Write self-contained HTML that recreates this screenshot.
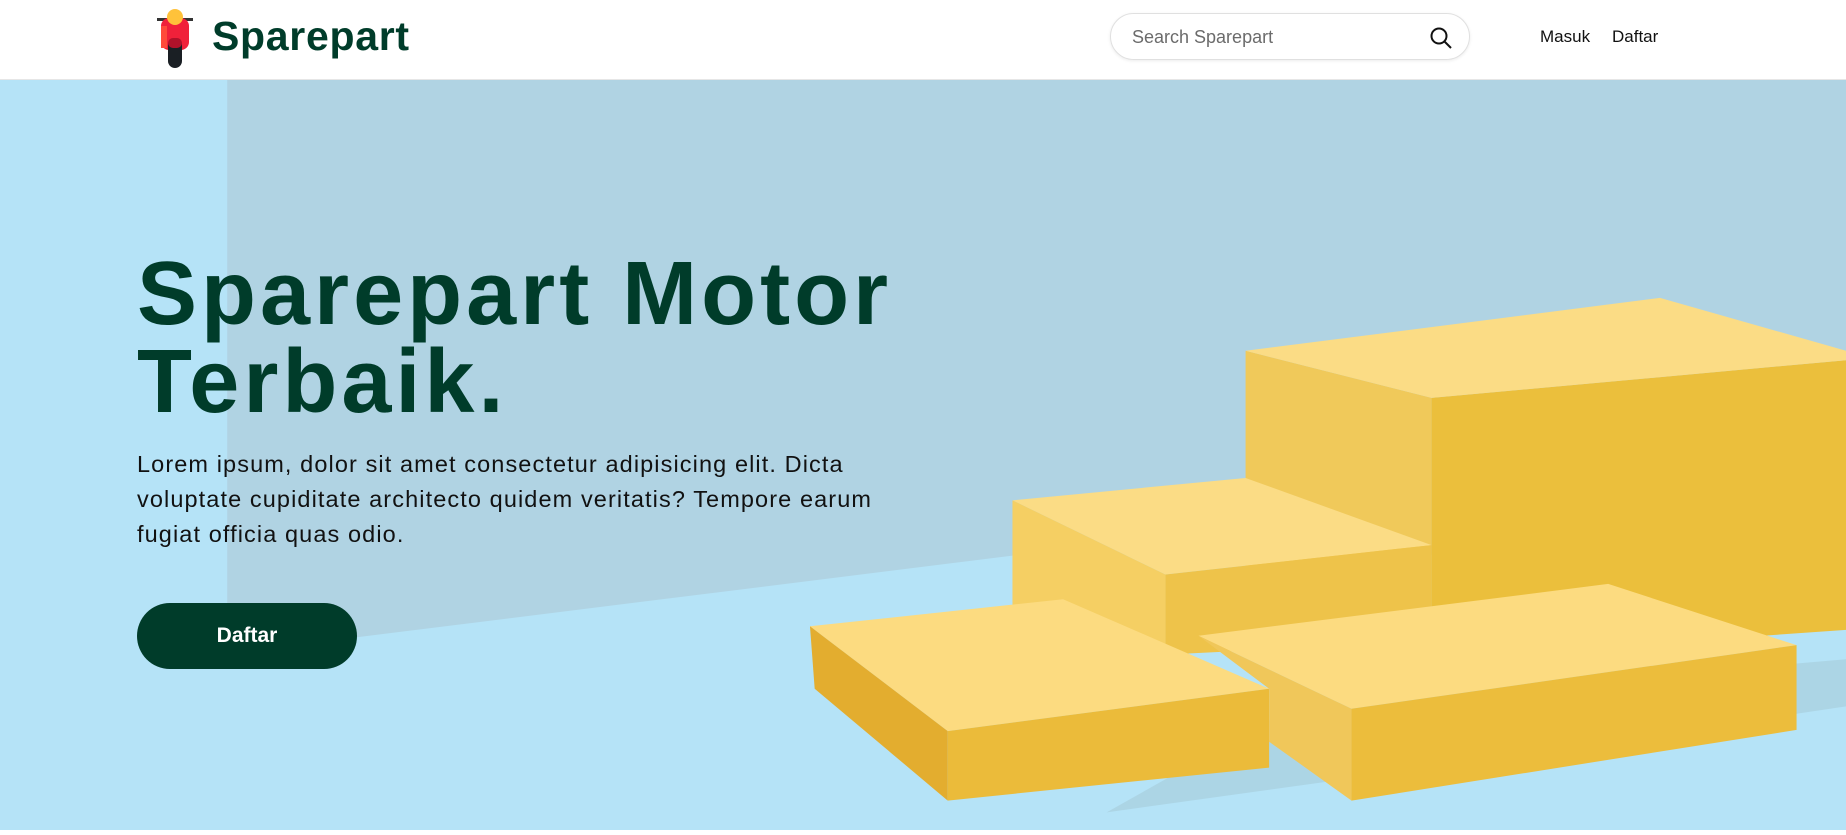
<!DOCTYPE html>
<html><head><meta charset="utf-8"><style>
*{margin:0;padding:0;box-sizing:border-box}
body{width:1846px;height:835px;overflow:hidden;background:#fff;font-family:"Liberation Sans",sans-serif;position:relative}
.hdr{position:absolute;left:0;top:0;width:1846px;height:80px;background:#fff;border-bottom:1px solid #e6e6e6}
.logo{position:absolute;left:212px;top:13px;font-size:41px;font-weight:700;color:#003c2a;letter-spacing:0.7px}
.search{position:absolute;left:1110px;top:13px;width:360px;height:47px;border:1px solid #e0e0e0;border-radius:24px;box-shadow:0 1px 3px rgba(0,0,0,.08)}
.search span{position:absolute;left:21px;top:13px;font-size:18px;color:#6b6b6b}
.nav{position:absolute;top:27px;font-size:17px;color:#111}
svg.bg{position:absolute;left:0;top:80px}
h1{position:absolute;left:137px;top:250px;font-size:90px;line-height:88px;color:#003c2a;font-weight:700;letter-spacing:4px;white-space:nowrap}
p{position:absolute;left:137px;top:447px;width:760px;font-size:23.5px;line-height:35px;color:#111;letter-spacing:1.1px}
.btn{position:absolute;left:137px;top:603px;width:220px;height:66px;border-radius:33px;background:#003c2a;color:#fff;font-size:21px;font-weight:700;text-align:center;line-height:66px}
</style></head><body>
<div class="hdr">
<svg style="position:absolute;left:157px;top:6px" width="36" height="62" viewBox="0 0 36 62">
<rect x="0" y="12" width="36" height="3" fill="#333"/>
<rect x="4" y="12" width="28" height="32" rx="8" fill="#f0213a"/>
<rect x="4" y="20" width="6" height="22" fill="#ff4a3a"/>
<circle cx="18" cy="11" r="8" fill="#ffc23a"/>
<rect x="11" y="32" width="14" height="30" rx="7" fill="#1a1f24"/>
<rect x="11" y="32" width="14" height="10" rx="5" fill="#b0122a"/>
</svg>
<div class="logo">Sparepart</div>
<div class="search"><span>Search Sparepart</span>
<svg style="position:absolute;left:318px;top:12px" width="24" height="24" viewBox="0 0 24 24" fill="none" stroke="#111" stroke-width="2"><circle cx="10" cy="10" r="7.5"/><path d="M15.5 15.5L22 22"/></svg></div>
<div class="nav" style="left:1540px">Masuk</div>
<div class="nav" style="left:1612px">Daftar</div>
</div>
<svg class="bg" width="1846" height="750" viewBox="0 68 1568 637" preserveAspectRatio="none">
<rect x="0" y="68" width="1568" height="640" fill="#b5e3f7"/>
<polygon points="193,68 1568,68 1568,470 860,472 193,555" fill="#b0d3e3"/>
<polygon points="940,690 1300,640 1568,600 1568,560 1100,600" fill="#a6cbd9" opacity=".6"/>
<polygon points="1058,298 1216,338 1216,545 1058,545" fill="#f0c95a"/>
<polygon points="1216,338 1568,306 1568,535 1216,560" fill="#ebbf3c"/>
<polygon points="1058,298 1410,253 1568,298 1568,306 1216,338" fill="#fbdc85"/>
<polygon points="860,425 1058,406 1216,463 990,488" fill="#fbdc85"/>
<polygon points="860,425 990,488 990,555 860,548" fill="#f5cf63"/>
<polygon points="990,488 1216,463 1216,545 990,556" fill="#eec34a"/>
<polygon points="688,532 903,509 1078,585 805,621" fill="#fcdb80"/>
<polygon points="688,532 805,621 805,680 692,585" fill="#e3ad2f"/>
<polygon points="805,621 1078,585 1078,652 805,680" fill="#ebbb3a"/>
<polygon points="1018,540 1366,496 1526,548 1148,602" fill="#fcdb80"/>
<polygon points="1018,540 1148,602 1148,680 1078,630 1078,585" fill="#f0c75a"/>
<polygon points="1148,602 1526,548 1526,620 1148,680" fill="#ecbd3c"/>
</svg>
<div style="position:absolute;left:0;top:830px;width:1846px;height:5px;background:#fff"></div>
<h1>Sparepart Motor<br>Terbaik.</h1>
<p>Lorem ipsum, dolor sit amet consectetur adipisicing elit. Dicta voluptate cupiditate architecto quidem veritatis? Tempore earum fugiat officia quas odio.</p>
<div class="btn">Daftar</div>
</body></html>
